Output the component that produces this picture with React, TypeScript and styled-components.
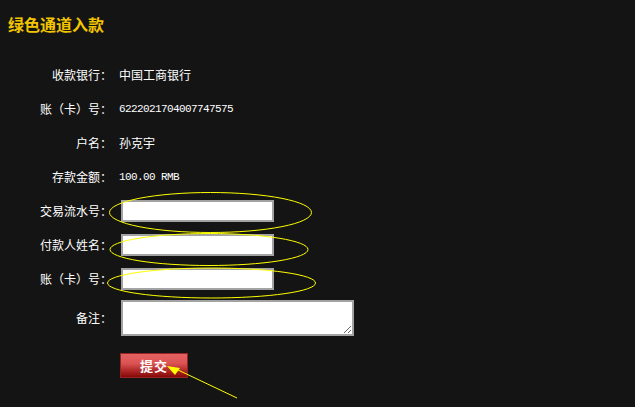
import React from "react";
import styled, { createGlobalStyle } from "styled-components";

const Global = createGlobalStyle`
  html, body {
    margin: 0;
    padding: 0;
    background: #141414;
  }
  body {
    font-family: "Noto Sans CJK SC", "Noto Sans", sans-serif;
    font-size: 12px;
    color: #ffffff;
  }
`;

const Page = styled.div`
  position: relative;
  width: 635px;
  height: 407px;
  overflow: hidden;
  background: #141414;
`;

const Title = styled.h1`
  margin: 0;
  padding: 14px 0 0 8px;
  height: 20px;
  line-height: 20px;
  font-size: 16px;
  font-weight: bold;
  color: #f3c500;
  font-family: "Noto Sans CJK SC", sans-serif;
`;

const Form = styled.div`
  display: flex;
  flex-direction: column;
  margin-top: 24px;
`;

const Row = styled.div<{ $h?: number }>`
  display: grid;
  grid-template-columns: 112px 1fr;
  column-gap: 7px;
  align-items: center;
  height: ${(p) => p.$h ?? 34}px;
`;

const Label = styled.div`
  text-align: right;
  white-space: nowrap;
  line-height: 16px;
`;

const Value = styled.div`
  display: flex;
  align-items: center;
  line-height: 16px;
  white-space: nowrap;
`;

const Latin = styled.span`
  font-family: "Liberation Mono", "DejaVu Sans Mono", monospace;
  font-size: 11px;
  letter-spacing: -0.6px;
`;

const TextInput = styled.input`
  box-sizing: border-box;
  width: 153px;
  height: 22px;
  margin: 0 0 0 2px;
  padding: 1px 2px;
  border: 2px solid #a3a3a3;
  background: #ffffff;
  outline: none;
  font-size: 12px;
`;

const Memo = styled.textarea`
  box-sizing: border-box;
  width: 233px;
  height: 36px;
  margin: 0 0 0 2px;
  padding: 1px 2px;
  border: 2px solid #a3a3a3;
  background: #ffffff;
  outline: none;
  font-size: 12px;
`;

const SubmitRow = styled.div`
  display: flex;
  padding-left: 120px;
  margin-top: 13px;
`;

const SubmitButton = styled.button`
  box-sizing: border-box;
  width: 68px;
  height: 25px;
  padding: 0;
  border: 1px solid #962424;
  background: linear-gradient(
    to bottom,
    #e56262 0%,
    #dc5454 40%,
    #b32c2c 70%,
    #860808 100%
  );
  color: #ffffff;
  font-family: "Noto Sans CJK SC", sans-serif;
  font-size: 13px;
  font-weight: bold;
  letter-spacing: 1px;
  line-height: 22px;
  cursor: pointer;
`;

const Overlay = styled.svg`
  position: absolute;
  left: 0;
  top: 0;
  width: 635px;
  height: 407px;
  pointer-events: none;
`;

const info: { label: string; value: React.ReactNode }[] = [
  { label: "收款银行：", value: "中国工商银行" },
  { label: "账（卡）号：", value: <Latin>6222021704007747575</Latin> },
  { label: "户名：", value: "孙克宇" },
  { label: "存款金额：", value: <Latin>100.00 RMB</Latin> },
];

const fields = ["交易流水号：", "付款人姓名：", "账（卡）号："];

export default function App() {
  return (
    <Page>
      <Global />
      <Title>绿色通道入款</Title>
      <Form>
        {info.map((r, i) => (
          <Row key={i}>
            <Label>{r.label}</Label>
            <Value>{r.value}</Value>
          </Row>
        ))}
        {fields.map((f, i) => (
          <Row key={"f" + i}>
            <Label>{f}</Label>
            <Value>
              <TextInput type="text" />
            </Value>
          </Row>
        ))}
        <Row $h={44}>
          <Label>备注：</Label>
          <Value>
            <Memo />
          </Value>
        </Row>
        <SubmitRow>
          <SubmitButton type="button">提交</SubmitButton>
        </SubmitRow>
      </Form>
      <Overlay viewBox="0 0 635 407">
        <g fill="none" stroke="#ffff00" strokeWidth="1">
          <ellipse cx="210.5" cy="212.5" rx="101" ry="20" />
          <ellipse cx="209" cy="249.5" rx="99" ry="16" />
          <ellipse cx="211.5" cy="283" rx="104" ry="15" />
          <line x1="176" y1="369" x2="237" y2="398" />
        </g>
        <polygon points="167,366 180,368 175,375" fill="#ffff00" />
      </Overlay>
    </Page>
  );
}
